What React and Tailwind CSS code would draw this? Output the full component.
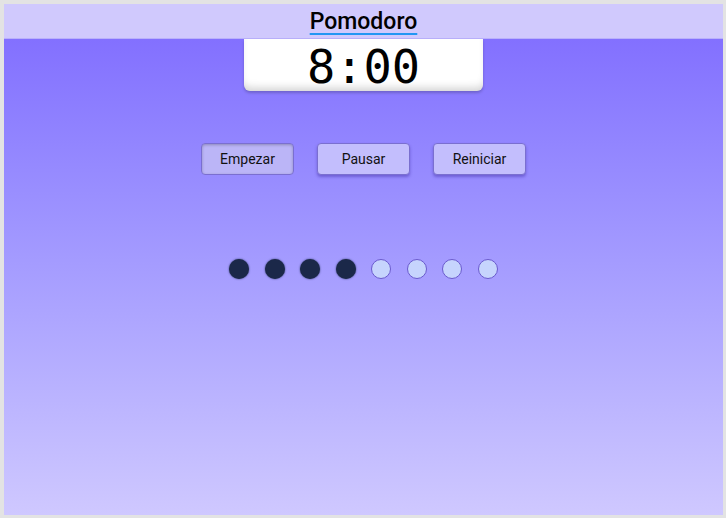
import React, { useState } from 'react';

const TOTAL = 8;

const App = () => {
  const [done] = useState(4);
  const [time] = useState('8:00');

  const buttons = [
    { label: 'Empezar', active: true },
    { label: 'Pausar', active: false },
    { label: 'Reiniciar', active: false },
  ];

  return (
    <div className="h-[518px] w-[726px] bg-[#e3e3e3] pl-[4px] pt-[4px] pr-[3px] pb-[3px] flex flex-col font-['Roboto',sans-serif]">
      {/* Header */}
      <header className="h-[35px] shrink-0 bg-[#d0c9fd] border-b border-[#b9b0fb] flex items-center justify-center">
        <h1 className="text-[23px] font-medium leading-none text-black underline decoration-[#2196f3] decoration-2 underline-offset-[4px] mt-[1px]">
          Pomodoro
        </h1>
      </header>

      {/* Main */}
      <main className="flex-1 bg-gradient-to-b from-[#8370ff] to-[#cfc8ff] flex flex-col items-center">
        <div className="w-[239px] h-[52px] bg-white rounded-b-[6px] flex items-center justify-center shadow-[inset_0_-7px_8px_-4px_rgba(0,0,0,0.18),0_2px_3px_rgba(0,0,0,0.2)]">
          <span className="font-['DejaVu_Sans_Mono',monospace] text-[47px] leading-none text-black mt-[3px]">
            {time}
          </span>
        </div>

        <div className="flex gap-[23px] mt-[52px]">
          {buttons.map((b) => (
            <button
              key={b.label}
              className={`w-[93px] h-[32px] rounded-[4px] border border-[#7a6fd0] text-[14px] text-[#111] ${
                b.active
                  ? 'bg-[#bbb5f7] shadow-[inset_0_1px_3px_rgba(0,0,0,0.25)]'
                  : 'bg-[#c3befd] shadow-[0_2px_3px_rgba(60,40,160,0.45)]'
              }`}
            >
              {b.label}
            </button>
          ))}
        </div>

        <div className="flex gap-[15.5px] mt-[84px]">
          {Array.from({ length: TOTAL }).map((_, i) => (
            <span
              key={i}
              className={
                i < done
                  ? 'w-[20px] h-[20px] rounded-full bg-[#1b2849] shadow-[0_0_2px_rgba(27,40,73,0.9)]'
                  : 'w-[20px] h-[20px] rounded-full bg-[#c6d4fd] border border-[#6a5acd]'
              }
            />
          ))}
        </div>
      </main>
    </div>
  );
};

export default App;
